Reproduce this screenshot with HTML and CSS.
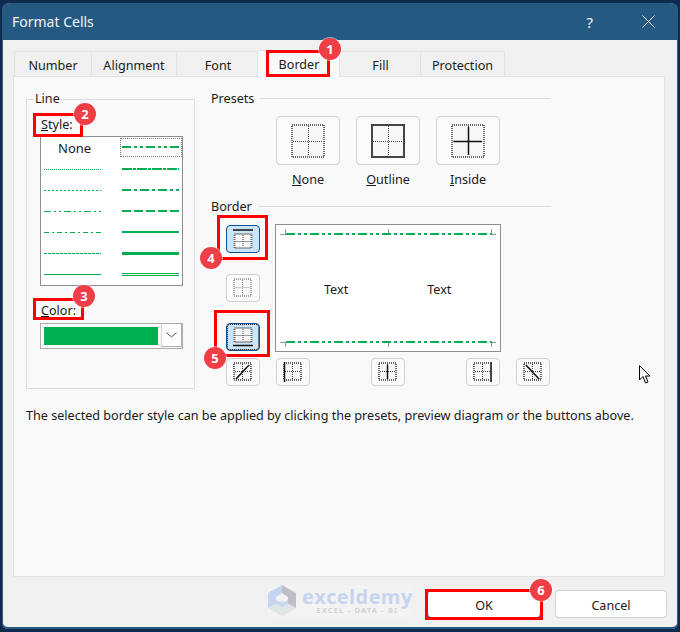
FILE: index.html
```html
<!DOCTYPE html>
<html lang="en">
<head>
    <meta charset="UTF-8">
    <title>Format Cells</title>
    <link rel="stylesheet" href="styles.css">
</head>
<body>

    <svg class="defs" width="0" height="0">
        <defs>
            <g id="grid-big">
                <rect x="1" y="1" width="32" height="32" class="cell"/>
                <rect x="1" y="1" width="32" height="32" class="dots"/>
                <path d="M17.5 2V32M2 17.5H32" class="dots-thin"/>
            </g>
            <g id="grid-small">
                <rect x="1" y="1" width="17" height="17" class="cell"/>
                <rect x="1" y="1" width="17" height="17" class="dots"/>
                <path d="M9.5 2V17M2 9.5H17" class="dots-thin"/>
            </g>
            <g id="grid-flat">
                <rect x="1" y="1" width="17" height="14" class="cell"/>
                <rect x="1" y="1" width="17" height="14" class="dots"/>
                <path d="M9.5 2V14M2 8.5H17" class="dots-thin"/>
            </g>
        </defs>
    </svg>

    <div class="dialog">
        <div class="titlebar">
            <span class="title">Format Cells</span>
            <span class="help">?</span>
            <svg class="close" width="13" height="13" viewBox="0 0 13 13"><path d="M0.5 0.5L12.5 12.5M12.5 0.5L0.5 12.5"/></svg>
        </div>

        <div class="tabs">
            <div class="tab tab-number">Number</div>
            <div class="tab tab-alignment">Alignment</div>
            <div class="tab tab-font">Font</div>
            <div class="tab tab-border active">Border</div>
            <div class="tab tab-fill">Fill</div>
            <div class="tab tab-protection">Protection</div>
        </div>

        <div class="panel">
            <div class="columns">
                <fieldset class="line-group">
                    <legend>Line</legend>
                    <div class="field-label"><u>S</u>tyle:</div>
                    <div class="style-list">
                        <div class="style-none">None</div>
                        <div class="sample selected"><svg width="57" height="5"><line class="s-dashdotdot" x1="0" y1="2" x2="57" y2="2"/></svg></div>
                        <div class="sample"><svg width="57" height="5"><line class="s-hair" x1="0" y1="3.5" x2="57" y2="3.5"/></svg></div>
                        <div class="sample"><svg width="57" height="5"><line class="s-slant" x1="0" y1="3" x2="57" y2="3"/></svg></div>
                        <div class="sample"><svg width="57" height="5"><line class="s-dot" x1="0" y1="3.5" x2="57" y2="3.5"/></svg></div>
                        <div class="sample"><svg width="57" height="5"><line class="s-meddashdot" x1="0" y1="3" x2="57" y2="3"/></svg></div>
                        <div class="sample"><svg width="57" height="5"><line class="s-thindashdotdot" x1="0" y1="3.5" x2="57" y2="3.5"/></svg></div>
                        <div class="sample"><svg width="57" height="5"><line class="s-meddash" x1="0" y1="3" x2="57" y2="3"/></svg></div>
                        <div class="sample"><svg width="57" height="5"><line class="s-thindashdot" x1="0" y1="3.5" x2="57" y2="3.5"/></svg></div>
                        <div class="sample"><svg width="57" height="5"><line class="s-medium" x1="0" y1="3" x2="57" y2="3"/></svg></div>
                        <div class="sample"><svg width="57" height="5"><line class="s-thindash" x1="0" y1="3.5" x2="57" y2="3.5"/></svg></div>
                        <div class="sample"><svg width="57" height="5"><line class="s-thick" x1="0" y1="3.5" x2="57" y2="3.5"/></svg></div>
                        <div class="sample"><svg width="57" height="5"><line class="s-thin" x1="0" y1="3.5" x2="57" y2="3.5"/></svg></div>
                        <div class="sample"><svg width="57" height="5"><path class="s-thin" d="M0 2.5H57M0 4.5H57"/></svg></div>
                    </div>
                    <div class="field-label color-label"><u>C</u>olor:</div>
                    <div class="color-combo">
                        <div class="swatch"></div>
                        <div class="combo-arrow"><svg width="11" height="6" viewBox="0 0 11 6"><path d="M0.5 0.5L5.5 5L10.5 0.5"/></svg></div>
                    </div>
                </fieldset>

                <div class="right-col">
                    <div class="section-head">Presets</div>
                    <div class="presets">
                        <div class="preset">
                            <div class="btn preset-btn"><svg width="34" height="34"><use href="#grid-big"/></svg></div>
                            <span><u>N</u>one</span>
                        </div>
                        <div class="preset">
                            <div class="btn preset-btn"><svg width="34" height="34"><use href="#grid-big"/><rect x="1" y="1" width="32" height="32" class="edge-thick"/></svg></div>
                            <span><u>O</u>utline</span>
                        </div>
                        <div class="preset">
                            <div class="btn preset-btn"><svg width="34" height="34"><use href="#grid-big"/><path d="M17.5 3V31M3 17.5H31" class="edge"/></svg></div>
                            <span><u>I</u>nside</span>
                        </div>
                    </div>

                    <div class="section-head border-head">Border</div>
                    <div class="border-grid">
                        <div class="side-btns">
                            <div class="btn small on"><svg width="20" height="20"><g transform="translate(0.5 4)"><use href="#grid-flat"/></g><path d="M0 1H20" class="edge"/></svg></div>
                            <div class="btn small off"><svg width="20" height="20"><use href="#grid-small"/><path d="M1 9.5H18" class="edge-off"/></svg></div>
                            <div class="btn small on focus"><svg width="20" height="20"><g transform="translate(0.5 0)"><use href="#grid-flat"/></g><path d="M0 18.5H20" class="edge"/></svg></div>
                        </div>
                        <div class="preview">
                            <span>Text</span>
                            <span>Text</span>
                            <svg class="preview-lines" width="226" height="127">
                                <path class="tick" d="M4 9.5H10M9.5 4V9M112.5 4V9M215.5 4V9M216 9.5H220M4 117.5H10M9.5 118V122M112.5 118V122M215.5 118V122M216 117.5H220"/>
                                <line class="s-preview" x1="10" y1="9" x2="216" y2="9"/>
                                <line class="s-preview" x1="10" y1="117" x2="216" y2="117"/>
                            </svg>
                        </div>
                        <div class="btn small diag-up"><svg width="20" height="20"><use href="#grid-small"/><path d="M3 17L16 3" class="edge"/></svg></div>
                        <div class="bottom-btns">
                            <div class="btn small"><svg width="20" height="20"><use href="#grid-small"/><path d="M1.5 0V20" class="edge"/></svg></div>
                            <div class="btn small"><svg width="20" height="20"><use href="#grid-small"/><path d="M9.5 3V17" class="edge"/></svg></div>
                            <div class="btn small"><svg width="20" height="20"><use href="#grid-small"/><path d="M18 0V20" class="edge-thick"/></svg></div>
                        </div>
                        <div class="btn small"><svg width="20" height="20"><use href="#grid-small"/><path d="M3 3L16 17" class="edge"/></svg></div>
                    </div>
                </div>
            </div>
            <p class="hint">The selected border style can be applied by clicking the presets, preview diagram or the buttons above.</p>
        </div>

        <div class="footer">
            <div class="watermark">
                <svg class="wm-logo" width="28" height="31" viewBox="0 0 28 31">
                    <path class="wm-bottom" d="M0 23L14 15L28 23L14 31Z"/>
                    <path class="wm-right" d="M14 0L28 8V23L20 18.5V12L14 8Z"/>
                    <path class="wm-left" d="M0 8L14 0V8L8 12V18.5L0 23Z"/>
                    <path class="wm-mid" d="M8 15L14 18.5L20 15V18.5L14 22L8 18.5Z"/>
                </svg>
                <div class="wm-text">
                    <div class="wm-name">exceldemy</div>
                    <div class="wm-sub">EXCEL - DATA - BI</div>
                </div>
            </div>
            <div class="btn action ok">OK</div>
            <div class="btn action">Cancel</div>
        </div>
    </div>

    <!-- annotations on top of the dialog -->
    <div class="mark mark-1"></div>
    <div class="mark mark-2"></div>
    <div class="mark mark-3"></div>
    <div class="mark mark-4"></div>
    <div class="mark mark-5"></div>
    <div class="mark mark-6"></div>
    <div class="badge badge-1">1</div>
    <div class="badge badge-2">2</div>
    <div class="badge badge-3">3</div>
    <div class="badge badge-4">4</div>
    <div class="badge badge-5">5</div>
    <div class="badge badge-6">6</div>

    <svg class="cursor" width="13" height="20" viewBox="0 0 13 20">
        <path d="M0.5 0.5V15L4 11.5L6.5 18L9 17L6.5 11H11Z"/>
    </svg>

</body>
</html>
```

FILE: styles.css
```css
/* Page and window */
body {
    margin: 0;
    width: 680px;
    height: 632px;
    position: relative;
    overflow: hidden;
    background-color: #0e2a4e;
    font-family: "Noto Sans", "Open Sans", sans-serif;
    font-size: 12.6px;
    color: #1a1a1a;
}

.defs {
    position: absolute;
}

.dialog {
    margin: 3px 2px;
    width: 676px;
    height: 626px;
    display: flex;
    flex-direction: column;
    background-color: #f0f0f0;
    border-radius: 8px 8px 6px 6px;
    overflow: hidden;
    box-shadow: inset 0 -2px 0 #2b5a80, inset -1px 0 0 #2b5a80, inset 1px 0 0 #2b5a80;
}

/* Title bar */
.titlebar {
    height: 37px;
    flex: none;
    display: flex;
    align-items: center;
    padding-left: 10px;
    background-color: #245a82;
    color: #f2f6f9;
}

.title {
    font-size: 14px;
}

.help {
    margin-left: auto;
    margin-right: 49px;
    font-size: 15px;
}

.close {
    margin-right: 23px;
}

.close path {
    stroke: #f2f6f9;
    stroke-width: 1;
    fill: none;
}

/* Tabs */
.tabs {
    display: flex;
    align-items: flex-end;
    height: 36px;
    flex: none;
    padding-left: 12px;
}

.tab {
    height: 25px;
    display: flex;
    align-items: center;
    justify-content: center;
    box-sizing: border-box;
    padding-top: 2px;
    border: 1px solid #e3e3e3;
    border-bottom: none;
    border-left: none;
    background-color: #f0f0f0;
}

.tab-number { width: 78px; border-left: 1px solid #e3e3e3; }
.tab-alignment { width: 85px; }
.tab-font { width: 81px; padding-left: 2px; }
.tab-border { width: 82px; padding-left: 1px; }
.tab-fill { width: 81px; padding-left: 1px; }
.tab-protection { width: 84px; }

.tab.active {
    height: 27px;
    padding-top: 0;
    background-color: #f9f9f9;
    position: relative;
    margin-bottom: -1px;
}

/* Main panel */
.panel {
    margin-left: 11px;
    width: 652px;
    height: 501px;
    flex: none;
    box-sizing: border-box;
    border: 1px solid #e3e3e3;
    background-color: #f9f9f9;
    padding: 13px 0 0 12px;
}

.columns {
    display: flex;
    gap: 16px;
}

.line-group {
    width: 169px;
    height: 299px;
    box-sizing: border-box;
    margin: 0;
    padding: 0 0 0 13px;
    border: 1px solid #dcdcdc;
}

.line-group legend {
    padding: 0 1px;
    margin-left: -6px;
    line-height: 18px;
}

.field-label {
    line-height: 17px;
    padding-top: 8px;
    height: 15px;
    margin-bottom: 5px;
    padding-left: 1px;
}

.style-list {
    width: 143px;
    height: 150px;
    box-sizing: border-box;
    border: 1px solid #8a8f96;
    background-color: #fff;
    display: grid;
    grid-template-columns: 80px 60px;
    grid-auto-rows: 21px;
}

.style-none {
    padding-left: 17px;
    line-height: 22px;
    font-size: 13px;
}

.sample {
    display: flex;
    align-items: center;
    padding-left: 1px;
    box-sizing: border-box;
}

.sample:nth-child(odd) {
    padding-left: 3px;
}

.sample svg line,
.sample svg path {
    stroke: #00b050;
    fill: none;
}

.sample.selected {
    outline: 1px dotted #777;
    height: 17px;
    margin-top: 2px;
}

.s-hair { stroke-width: 1; stroke-dasharray: 1 1; }
.s-dot { stroke-width: 1; stroke-dasharray: 2 2; }
.s-thindashdotdot { stroke-width: 1; stroke-dasharray: 7 3 2 3 2 3; }
.s-thindashdot { stroke-width: 1; stroke-dasharray: 5 3 2 3; }
.s-thindash { stroke-width: 1; stroke-dasharray: 3 1; }
.s-thin { stroke-width: 1; }
.s-dashdotdot { stroke-width: 2; stroke-dasharray: 9 3 3 3 3 3; }
.s-slant { stroke-width: 2; stroke-dasharray: 10 1 3 1; }
.s-meddashdot { stroke-width: 2; stroke-dasharray: 9 3 3 3; }
.s-meddash { stroke-width: 2; stroke-dasharray: 9 3; }
.s-medium { stroke-width: 2; }
.s-thick { stroke-width: 3; }

.color-label {
    margin-top: 8px;
    margin-bottom: 6px;
}

.color-combo {
    width: 143px;
    height: 26px;
    box-sizing: border-box;
    border: 1px solid #adadad;
    background-color: #f9f9f9;
    display: flex;
    padding: 3px 0 3px 3px;
}

.swatch {
    width: 114px;
    height: 18px;
    flex: none;
    background-color: #00b050;
}

.combo-arrow {
    margin: -3px 0 -2px 3px;
    width: 21px;
    display: flex;
    align-items: center;
    justify-content: center;
    background-color: #fff;
    border-left: 1px solid #d8d8d8;
    border-right: 1px solid #adadad;
    border-bottom: 1px solid #adadad;
}

.combo-arrow path {
    stroke: #555;
    fill: none;
}

/* Presets and border buttons */
.right-col {
    width: 340px;
}

.section-head {
    display: flex;
    align-items: center;
    gap: 6px;
    height: 17px;
}

.section-head::after {
    content: "";
    flex: 1;
    border-top: 1px solid #dcdcdc;
}

.presets {
    display: flex;
    gap: 16px;
    margin: 9px 0 0 65px;
}

.preset {
    display: flex;
    flex-direction: column;
    align-items: center;
    gap: 6px;
    width: 64px;
}

.btn {
    box-sizing: border-box;
    border: 1px solid #d0d0d0;
    border-radius: 4px;
    background-color: #fbfbfb;
    display: flex;
    align-items: center;
    justify-content: center;
}

.preset-btn {
    width: 64px;
    height: 49px;
}

.cell {
    fill: #f7f7f7;
}

.dots {
    fill: none;
    stroke: #666;
    stroke-width: 2;
    stroke-dasharray: 1 1;
}

.dots-thin {
    fill: none;
    stroke: #444;
    stroke-width: 1;
    stroke-dasharray: 1 1;
}

.edge {
    fill: none;
    stroke: #111;
    stroke-width: 1.5;
}

.edge-thick {
    fill: none;
    stroke: #444;
    stroke-width: 2;
}

.edge-off {
    fill: none;
    stroke: #aaa;
}

.border-head {
    margin-top: 10px;
}

.border-grid {
    display: grid;
    grid-template-columns: 34px 226px 34px;
    column-gap: 15px;
    row-gap: 6px;
    margin: 9px 0 0 15px;
}

.side-btns {
    display: flex;
    flex-direction: column;
    justify-content: space-between;
    padding: 1px 0;
}

.small {
    width: 34px;
    height: 28px;
}

.small.on {
    background-color: #cce4f7;
    border-color: #005499;
}

.small.focus {
    outline: 1px dotted #111;
    outline-offset: -2px;
}

.small.off svg {
    opacity: 0.55;
}

.diag-up {
    grid-column: 1;
}

.preview {
    height: 128px;
    box-sizing: border-box;
    border: 1px solid #8a8f96;
    background-color: #fff;
    position: relative;
    display: flex;
    align-items: center;
    padding: 3px 0 0 48px;
    gap: 79px;
}

.preview-lines {
    position: absolute;
    top: 0;
    left: 0;
}

.tick {
    fill: none;
    stroke: #999;
}

.s-preview {
    stroke: #00b050;
    stroke-width: 2;
    stroke-dasharray: 9 3 3 3 3 3;
}

.bottom-btns {
    display: flex;
    justify-content: space-between;
    padding: 0 1px;
}

.hint {
    margin: 18px 0 0;
}

/* Footer */
.footer {
    flex: 1;
    display: flex;
    align-items: flex-start;
    justify-content: flex-end;
    gap: 14px;
    padding: 13px 11px 0 0;
    position: relative;
}

.action {
    width: 112px;
    height: 28px;
    padding-top: 2px;
    background-color: #fff;
}

.ok {
    width: 114px;
    border-color: #005fb8;
}

.watermark {
    position: absolute;
    left: 266px;
    top: 8px;
    width: 144px;
    height: 32px;
    display: flex;
    gap: 6px;
    background-color: #f3f3f3;
}

.wm-logo {
    flex: none;
}

.wm-right { fill: #bcbfc5; }
.wm-left { fill: #c4d4f1; }
.wm-bottom { fill: #dfe6e6; }
.wm-mid { fill: #c4d4f1; }

.wm-text {
    padding-top: 3px;
}

.wm-name {
    font-family: "Open Sans", sans-serif;
    font-weight: 700;
    font-size: 20px;
    line-height: 18px;
    letter-spacing: 0.4px;
    color: #c7d4f0;
}

.wm-sub {
    font-size: 7.5px;
    font-weight: 700;
    line-height: 9px;
    letter-spacing: 1.2px;
    color: #d2d2d2;
    text-align: center;
}

/* Numbered annotations */
.mark {
    position: absolute;
    box-sizing: border-box;
    border: 3px solid #ff0000;
}

.mark-1 { left: 266px; top: 50px; width: 64px; height: 27px; }
.mark-2 { left: 33px; top: 113px; width: 50px; height: 24px; }
.mark-3 { left: 33px; top: 298px; width: 51px; height: 22px; }
.mark-4 { left: 217px; top: 215px; width: 51px; height: 45px; }
.mark-5 { left: 214px; top: 310px; width: 56px; height: 47px; }
.mark-6 { left: 425px; top: 589px; width: 118px; height: 31px; }

.badge {
    position: absolute;
    box-sizing: border-box;
    width: 22px;
    height: 22px;
    border-radius: 50%;
    background-color: #ef3e46;
    color: #fff;
    font-size: 13px;
    font-weight: 700;
    line-height: 22px;
    text-align: center;
    box-shadow: 0 0 0 1px rgba(255, 255, 255, 0.5);
}

.badge-1 { left: 319px; top: 38px; }
.badge-2 { left: 74px; top: 103px; }
.badge-3 { left: 73px; top: 285px; }
.badge-4 { left: 200px; top: 247px; }
.badge-5 { left: 204px; top: 347px; }
.badge-6 { left: 530px; top: 579px; }

.cursor {
    position: absolute;
    left: 639px;
    top: 365px;
}

.cursor path {
    fill: #fff;
    stroke: #000;
    stroke-width: 1;
}
```
